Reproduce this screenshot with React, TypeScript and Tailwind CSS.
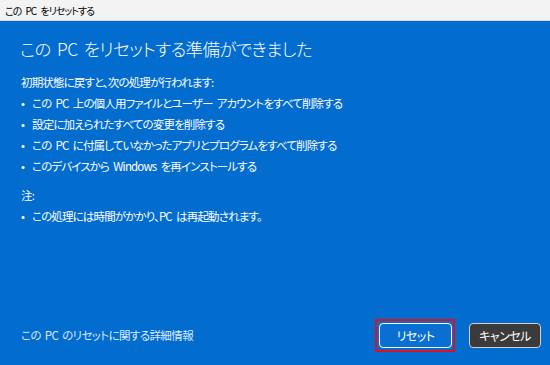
import React from "react";

const font = "font-['Yu_Gothic_UI','Noto_Sans_CJK_JP',sans-serif] [font-feature-settings:'palt']";

export default function App() {
  const items = [
    "この PC 上の個人用ファイルとユーザー アカウントをすべて削除する",
    "設定に加えられたすべての変更を削除する",
    "この PC に付属していなかったアプリとプログラムをすべて削除する",
    "このデバイスから Windows を再インストールする",
  ];
  return (
    <div className={`w-[550px] h-[365px] flex flex-col overflow-hidden ${font}`}>
      <div className="h-[21px] bg-[#f3f3f3] border-b border-[#d6d6d6] flex items-center px-[5px] text-[10px] tracking-[-1px] [word-spacing:3px] text-black">
        この PC をリセットする
      </div>
      <div className="flex-1 bg-[#036ccf] text-white flex flex-col pl-[20px] pr-[9px] pt-[15px] pb-[17px]">
        <div className="text-[17.5px] leading-[26px] tracking-[-0.6px] [word-spacing:3px] font-light">この PC をリセットする準備ができました</div>
        <div className="mt-[10px] text-[11.5px] leading-[21px] tracking-[-0.85px] [word-spacing:2.5px]">
          <div className="pl-[1px]">初期状態に戻すと、次の処理が行われます:</div>
          {items.map((t) => (
            <div key={t} className="flex">
              <span className="w-[12px] pl-[1px]">•</span>
              <span>{t}</span>
            </div>
          ))}
          <div className="mt-[8px] pl-[1px]">注:</div>
          <div className="flex">
            <span className="w-[12px] pl-[1px]">•</span>
            <span>この処理には時間がかかり、PC は再起動されます。</span>
          </div>
        </div>
        <div className="mt-auto flex items-center">
          <div className="flex-1 text-[11.5px] tracking-[-0.6px] [word-spacing:2px] text-[#d9e9ff] pl-[1px]">この PC のリセットに関する詳細情報</div>
          <div className="relative">
            <button className="w-[73px] h-[25px] rounded-[4px] border border-white bg-[#0a6fd2] text-white text-[12px] tracking-[-0.5px] block">
              リセット
            </button>
            <span className="absolute -left-[4px] -top-[4px] -right-[3px] -bottom-[4px] border-2 border-[#e0101e] pointer-events-none" />
          </div>
          <button className="ml-[17px] w-[72px] h-[25px] rounded-[4px] border border-[#d0d0d0] bg-[#3b3b3b] text-white text-[12px] tracking-[-0.5px]">
            キャンセル
          </button>
        </div>
      </div>
    </div>
  );
}
